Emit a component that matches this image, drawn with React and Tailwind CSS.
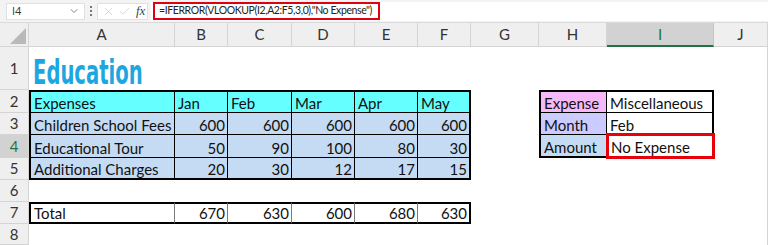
import React from 'react';
import { ChevronDown, X, Check } from 'lucide-react';

const COLS = ['A', 'B', 'C', 'D', 'E', 'F', 'G', 'H', 'I', 'J'];
const MONTHS = ['Jan', 'Feb', 'Mar', 'Apr', 'May'];

const EXPENSES = [
  { name: 'Children School Fees', values: [600, 600, 600, 600, 600] },
  { name: 'Educational Tour', values: [50, 90, 100, 80, 30] },
  { name: 'Additional Charges', values: [20, 30, 12, 17, 15] },
];

const TOTALS = [670, 630, 600, 680, 630];

const cellFont = { fontFamily: 'Lato, "Open Sans", sans-serif' };

function RowHead({ n, active }) {
  return (
    <div
      className={`flex items-center justify-center border-r border-b border-[#d4d4d4] text-[15px] ${
        active ? 'bg-[#d2d2d2] text-[#217346]' : 'bg-[#efefef] text-[#333]'
      }`}
      style={cellFont}
    >
      {n}
    </div>
  );
}

function Cell({ children, className = '', right }) {
  return (
    <div
      className={`flex items-end pb-[1px] text-[15px] leading-none text-[#111] overflow-hidden whitespace-nowrap ${
        right ? 'justify-end pr-[2px]' : 'pl-[3px]'
      } ${className}`}
      style={cellFont}
    >
      {children}
    </div>
  );
}

const Empty = ({ className = '' }) => <div className={className} />;

export default function App() {
  return (
    <div className="w-[768px] h-[245px] overflow-hidden bg-white relative">
      {/* formula bar */}
      <div className="h-[23px] bg-[#f3f3f3] flex items-center gap-[3px] pl-[6px] border-b border-[#dadada]">
        <div className="w-[79px] h-[17px] bg-white border border-[#e1e1e1] flex items-center justify-between pl-[5px] pr-[4px]">
          <span className="text-[11px] text-[#333]" style={{ fontFamily: '"Open Sans", sans-serif' }}>I4</span>
          <ChevronDown size={12} className="text-[#666]" strokeWidth={1.6} />
        </div>
        <div className="w-[6px] flex flex-col items-center gap-[2px]">
          <span className="w-[2px] h-[2px] bg-[#777]" />
          <span className="w-[2px] h-[2px] bg-[#777]" />
          <span className="w-[2px] h-[2px] bg-[#777]" />
        </div>
        <div className="w-[51px] h-[17px] bg-white border border-[#e1e1e1] flex items-center gap-[3px] pl-[4px]">
          <X size={13} className="text-[#c8c8c8]" strokeWidth={1.3} />
          <Check size={13} className="text-[#c8c8c8]" strokeWidth={1.3} />
          <span className="ml-[2px] text-[13px] italic text-[#444]" style={{ fontFamily: '"Liberation Serif", serif' }}>fx</span>
        </div>
        <div className="flex-1 h-[19px] bg-white flex items-center pl-[2px]">
          <div
            className="h-[18px] w-[227px] border-2 border-[#e0000f] flex items-center pl-[4px] text-[10.5px] tracking-[-0.4px] text-[#222] whitespace-nowrap"
            style={cellFont}
          >
            =IFERROR(VLOOKUP(I2,A2:F5,3,0),"No Expense")
          </div>
        </div>
      </div>

      {/* sheet */}
      <div className="grid grid-cols-[29px_146px_53px_64px_63px_63px_53px_68px_68px_107px_54px] grid-rows-[24px_43px_23px_22px_23px_22px_22px_22px_21px] border-r border-[#d4d4d4]">
        {/* column headers */}
        <div className="bg-[#efefef] border-r border-b border-[#d4d4d4] flex items-end justify-end p-[2px]">
          <svg width="16" height="16" viewBox="0 0 16 16">
            <polygon points="16,0 16,16 0,16" fill="#b9b9b9" />
          </svg>
        </div>
        {COLS.map((c) => (
          <div
            key={c}
            className={`flex items-center justify-center text-[15px] ${
              c === 'I'
                ? 'bg-[#d2d2d2] border-b-2 border-b-[#217346] border-r border-r-[#c4c4c4] text-[#217346]'
                : 'bg-[#efefef] border-b border-r border-[#d4d4d4] text-[#333]'
            }`}
            style={cellFont}
          >
            {c}
          </div>
        ))}

        {/* row 1 */}
        <RowHead n={1} />
        <div className="col-span-10 flex items-end pl-[4px] pb-[1px]">
          <span
            className="inline-block origin-left scale-x-[0.66] text-[33px] leading-none font-bold text-[#1ea6e1]"
            style={{ fontFamily: '"DejaVu Sans Condensed", "Liberation Sans", sans-serif' }}
          >
            Education
          </span>
        </div>

        {/* row 2 */}
        <RowHead n={2} />
        <Cell className="bg-[#66ffff] border-l-2 border-t-2 border-r border-b border-black">Expenses</Cell>
        {MONTHS.map((m, i) => (
          <Cell
            key={m}
            className={`bg-[#66ffff] border-t-2 border-b border-black ${i === 4 ? 'border-r-2' : 'border-r'}`}
          >
            {m}
          </Cell>
        ))}
        <Empty />
        <Cell className="bg-[#f5b9f7] border-l-2 border-t-2 border-r border-b border-black">Expense</Cell>
        <Cell className="bg-white border-t-2 border-r-2 border-b border-black">Miscellaneous</Cell>
        <Empty />

        {/* rows 3-5 */}
        {EXPENSES.map((row, r) => {
          const last = r === EXPENSES.length - 1;
          const bottom = last ? 'border-b-2' : 'border-b';
          return (
            <React.Fragment key={row.name}>
              <RowHead n={r + 3} active={r === 1} />
              <Cell className={`bg-[#c5dbf3] border-l-2 border-r ${bottom} border-black`}>{row.name}</Cell>
              {row.values.map((v, i) => (
                <Cell
                  key={i}
                  right
                  className={`bg-[#c5dbf3] ${bottom} border-black ${i === 4 ? 'border-r-2' : 'border-r'}`}
                >
                  {v}
                </Cell>
              ))}
              <Empty />
              {r === 0 && (
                <>
                  <Cell className="bg-[#cbcbff] border-l-2 border-r border-b border-black">Month</Cell>
                  <Cell className="bg-white border-r-2 border-b border-black">Feb</Cell>
                </>
              )}
              {r === 1 && (
                <>
                  <Cell className="bg-[#c5dbf3] border-l-2 border-r border-b-2 border-black">Amount</Cell>
                  <div className="relative border-r-2 border-b-2 border-black">
                    <div
                      className="absolute -left-[1px] -top-[2px] -right-[3px] -bottom-[3px] border-[3px] border-[#e8000b] flex items-end pl-[2px] pb-[1px] text-[15px] leading-none text-[#111] whitespace-nowrap"
                      style={cellFont}
                    >
                      No Expense
                    </div>
                  </div>
                </>
              )}
              {r === 2 && (
                <>
                  <Empty />
                  <Empty />
                </>
              )}
              <Empty />
            </React.Fragment>
          );
        })}

        {/* row 6 */}
        <RowHead n={6} />
        <div className="col-span-10" />

        {/* row 7 */}
        <RowHead n={7} />
        <Cell className="border-l-2 border-t-2 border-b-2 border-r border-r-[#7a7a7a] border-black">Total</Cell>
        {TOTALS.map((v, i) => (
          <Cell
            key={i}
            right
            className={`border-t-2 border-b-2 border-black ${i === 4 ? 'border-r-2 border-r-black' : 'border-r border-r-[#7a7a7a]'}`}
          >
            {v}
          </Cell>
        ))}
        <div className="col-span-4" />

        {/* row 8 */}
        <RowHead n={8} />
        <div className="col-span-10" />
      </div>
    </div>
  );
}
